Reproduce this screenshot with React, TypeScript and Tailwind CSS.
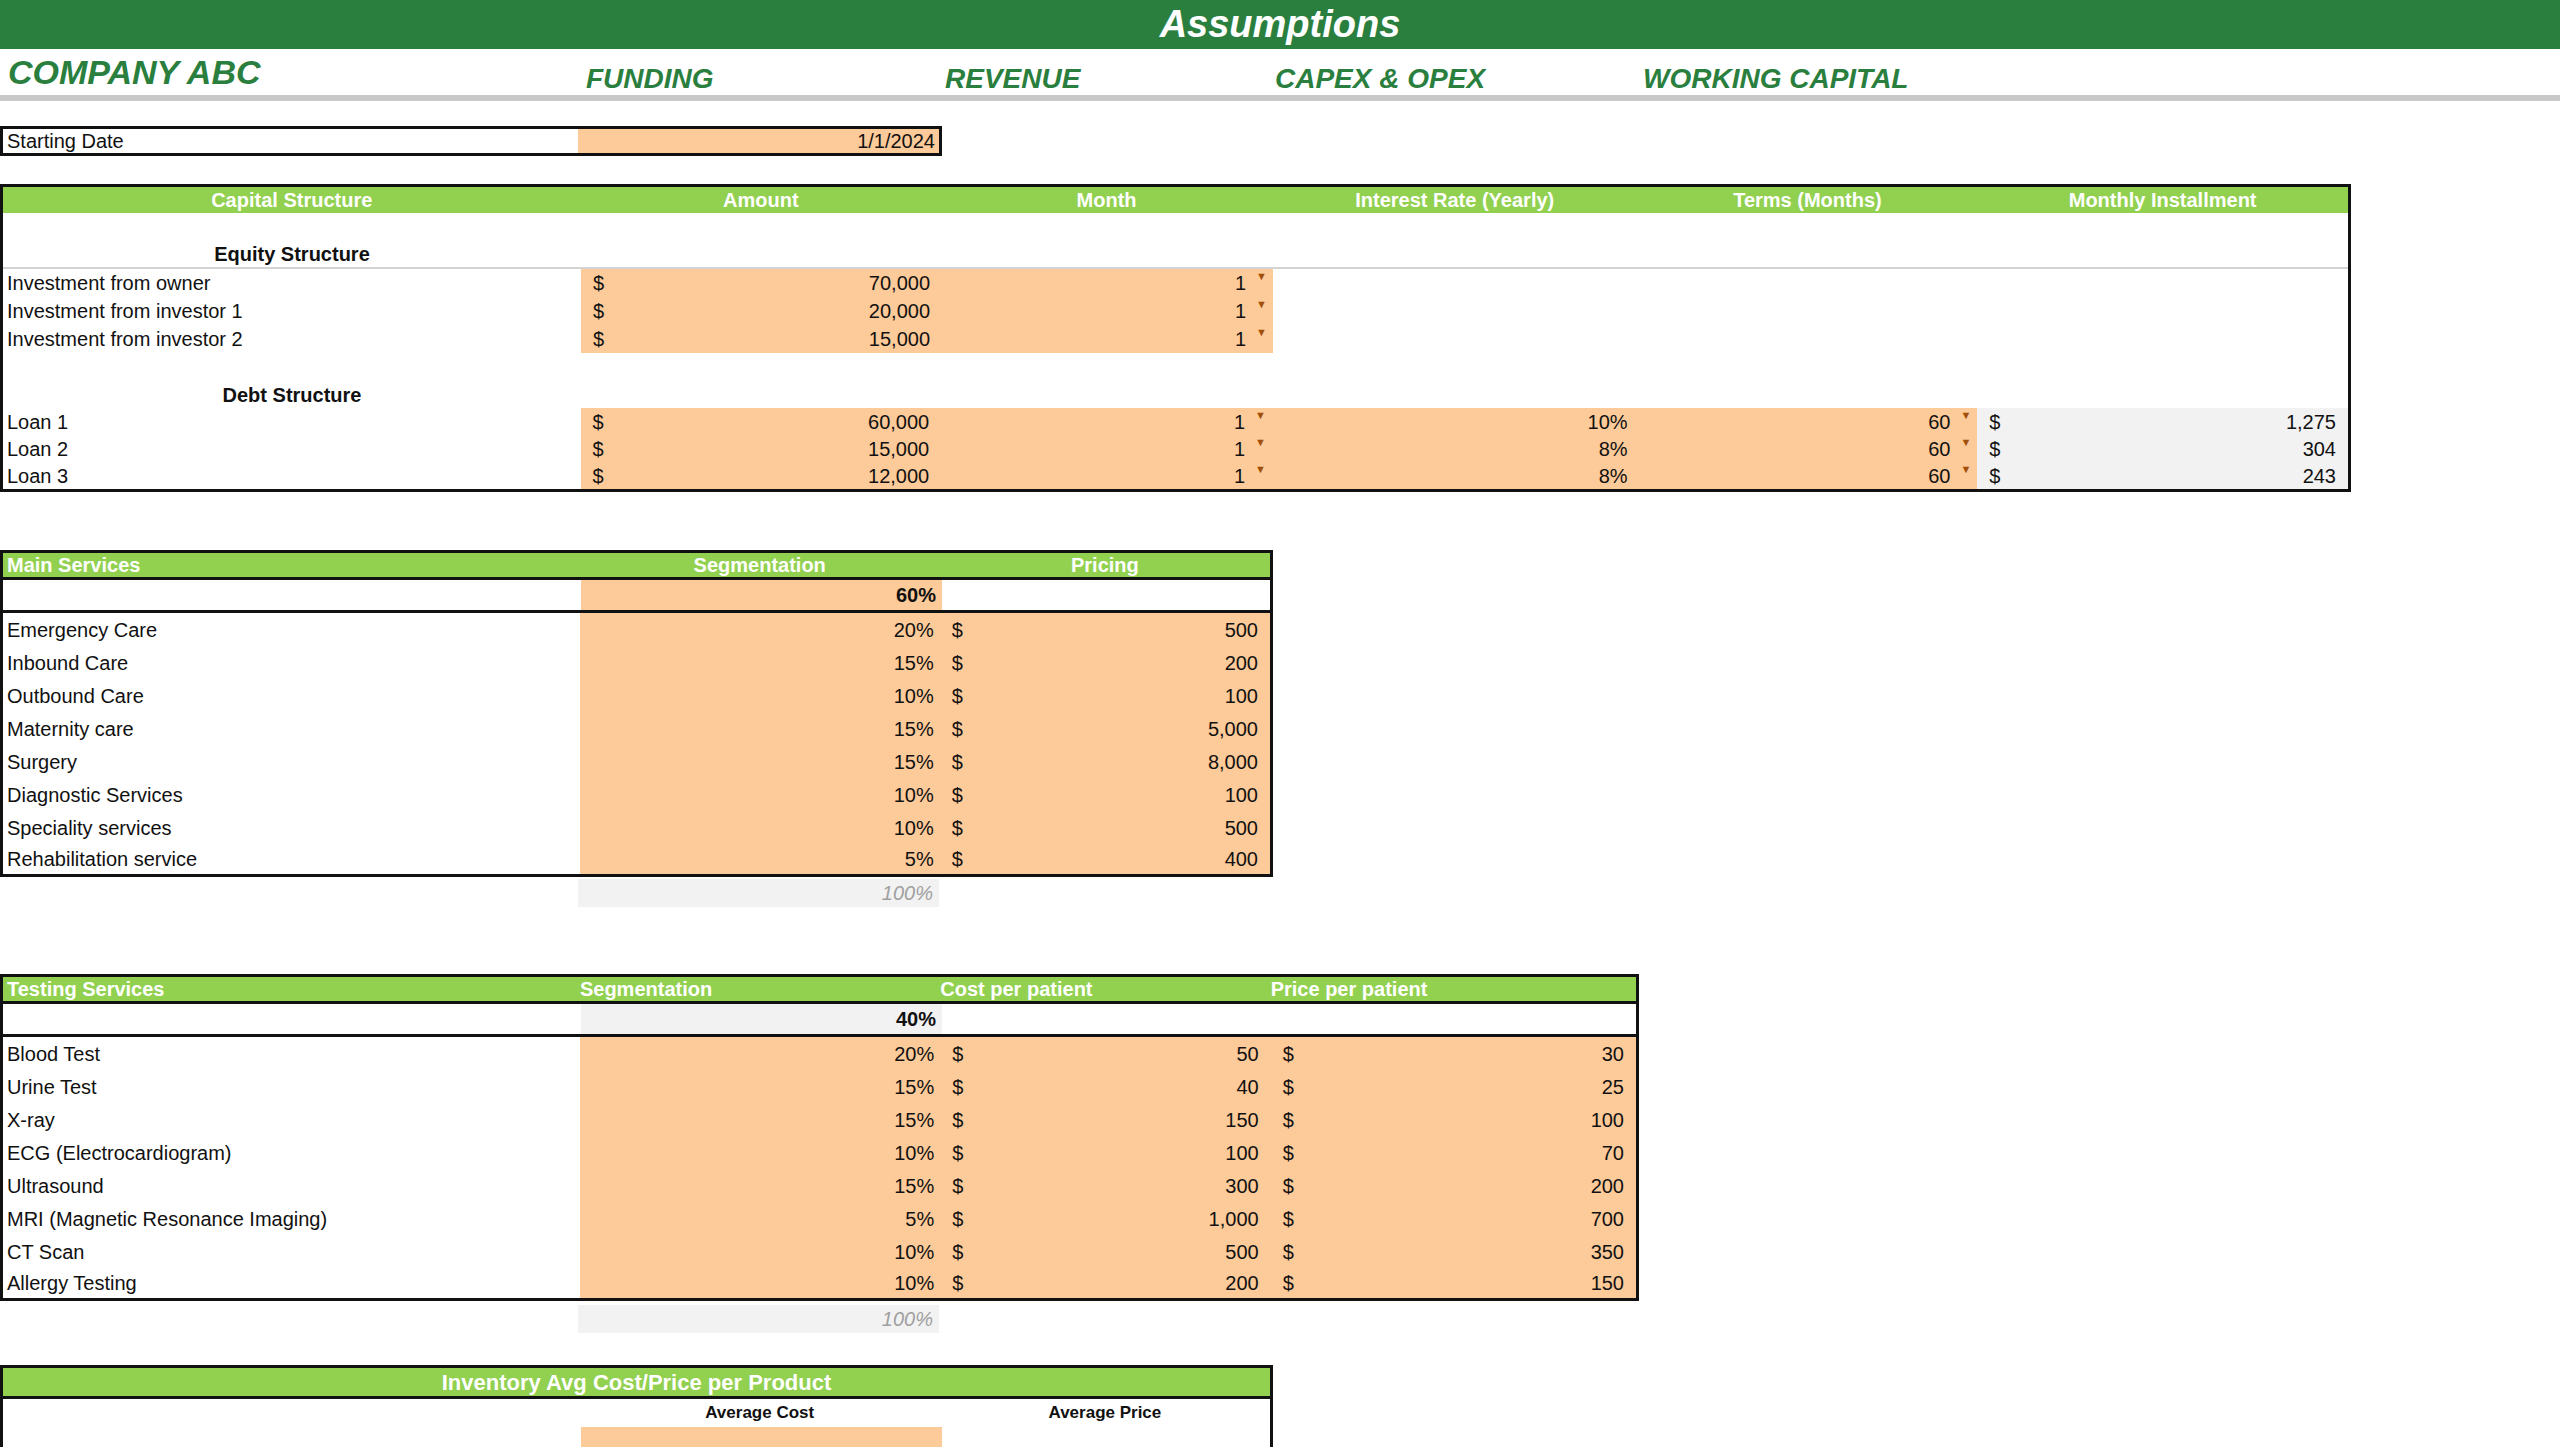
const font = { fontFamily: '"Liberation Sans", Arial, sans-serif' }

const W = ['w-[578px]', 'w-[361px]', 'w-[331px]', 'w-[366px]', 'w-[340px]', 'w-[371px]']

function Drop() {
  return <span className="ml-[10px] mr-[6px] self-start mt-[2px] text-[11px] leading-none text-[#a0500a]">▼</span>
}

function Money({ v, bg = 'bg-[#fdca99]', w }: { v: string; bg?: string; w: string }) {
  return (
    <div className={`${w} ${bg} flex justify-between items-center px-[12px] h-full`}>
      <span>$</span>
      <span>{v}</span>
    </div>
  )
}

function Blank({ w, bg = '' }: { w: string; bg?: string }) {
  return <div className={`${w} ${bg} h-full`} />
}

function Pct({ v, w, bg = 'bg-[#fdca99]', cls = '' }: { v: string; w: string; bg?: string; cls?: string }) {
  return <div className={`${w} ${bg} h-full flex items-center justify-end pr-[6px] ${cls}`}>{v}</div>
}

function MonthCell({ w }: { w: string }) {
  return (
    <div className={`${w} bg-[#fdca99] h-full flex items-center justify-end`}>
      <span>1</span>
      <Drop />
    </div>
  )
}

const equity = [
  ['Investment from owner', '70,000'],
  ['Investment from investor 1', '20,000'],
  ['Investment from investor 2', '15,000'],
]
const loans = [
  ['Loan 1', '60,000', '10%', '1,275'],
  ['Loan 2', '15,000', '8%', '304'],
  ['Loan 3', '12,000', '8%', '243'],
]
const mainServices = [
  ['Emergency Care', '20%', '500'],
  ['Inbound Care', '15%', '200'],
  ['Outbound Care', '10%', '100'],
  ['Maternity care', '15%', '5,000'],
  ['Surgery', '15%', '8,000'],
  ['Diagnostic Services', '10%', '100'],
  ['Speciality services', '10%', '500'],
  ['Rehabilitation service', '5%', '400'],
]
const testing = [
  ['Blood Test', '20%', '50', '30'],
  ['Urine Test', '15%', '40', '25'],
  ['X-ray', '15%', '150', '100'],
  ['ECG (Electrocardiogram)', '10%', '100', '70'],
  ['Ultrasound', '15%', '300', '200'],
  ['MRI (Magnetic Resonance Imaging)', '5%', '1,000', '700'],
  ['CT Scan', '10%', '500', '350'],
  ['Allergy Testing', '10%', '200', '150'],
]

export default function App() {
  return (
    <div className="w-[2560px] h-[1456px] overflow-hidden bg-white text-[20px] text-[#111]" style={font}>
      <div className="h-[49px] bg-[#2a7f3f] flex items-center justify-center">
        <span className="text-white font-bold italic text-[38px]">Assumptions</span>
      </div>
      <div className="h-[46px] flex items-end pb-[2px] text-[#2a7f3f] font-bold italic">
        <div className="w-[586px] pl-[8px] text-[34px] leading-none pb-[4px]">COMPANY ABC</div>
        <div className="w-[359px] text-[28px] leading-none">FUNDING</div>
        <div className="w-[330px] text-[28px] leading-none">REVENUE</div>
        <div className="w-[368px] text-[28px] leading-none">CAPEX &amp; OPEX</div>
        <div className="text-[28px] leading-none">WORKING CAPITAL</div>
      </div>
      <div className="h-[6px] bg-[#c8c8c8]" />

      {/* starting date */}
      <div className="mt-[25px] flex">
        <div className="flex h-[30px] border-[3px] border-[#111]">
          <div className="w-[575px] flex items-center pl-[4px]">Starting Date</div>
          <div className="w-[361px] bg-[#fdca99] flex items-center justify-end pr-[4px]">1/1/2024</div>
        </div>
      </div>

      {/* capital structure */}
      <div className="mt-[28px] w-[2351px] border-[3px] border-[#111]">
        <div className="flex h-[26px] bg-[#92d050] text-white font-bold items-center text-center">
          <div className={W[0]}>Capital Structure</div>
          <div className={W[1]}>Amount</div>
          <div className={W[2]}>Month</div>
          <div className={W[3]}>Interest Rate (Yearly)</div>
          <div className={W[4]}>Terms (Months)</div>
          <div className={W[5]}>Monthly Installment</div>
        </div>
        <div className="h-[28px]" />
        <div className="h-[28px] flex items-center border-b-2 border-[#d4d4d4] font-bold">
          <div className={`${W[0]} text-center`}>Equity Structure</div>
        </div>
        {equity.map(([l, v]) => (
          <div key={l} className="flex h-[28px] items-center">
            <div className={`${W[0]} pl-[4px]`}>{l}</div>
            <Money v={v} w={W[1]} />
            <MonthCell w={W[2]} />
          </div>
        ))}
        <div className="h-[28px]" />
        <div className="h-[27px] flex items-center font-bold">
          <div className={`${W[0]} text-center`}>Debt Structure</div>
        </div>
        {loans.map(([l, v, r, m]) => (
          <div key={l} className="flex h-[27px] items-center">
            <div className={`${W[0]} pl-[4px]`}>{l}</div>
            <Money v={v} w={W[1]} />
            <MonthCell w={W[2]} />
            <Pct v={r} w={W[3]} cls="pr-[10px]" />
            <div className={`${W[4]} bg-[#fdca99] h-full flex items-center justify-end`}>
              <span>60</span>
              <Drop />
            </div>
            <Money v={m} w={W[5]} bg="bg-[#f2f2f2]" />
          </div>
        ))}
      </div>

      {/* main services */}
      <div className="mt-[58px] w-[1273px] border-[3px] border-[#111]">
        <div className="flex h-[27px] bg-[#92d050] text-white font-bold items-center border-b-[3px] border-[#111]">
          <div className={`${W[0]} pl-[4px]`}>Main Services</div>
          <div className={`${W[1]} text-center`}>Segmentation</div>
          <div className={`${W[2]} text-center`}>Pricing</div>
        </div>
        <div className="flex h-[33px] items-center border-b-[3px] border-[#111] font-bold">
          <Blank w={W[0]} />
          <Pct v="60%" w={W[1]} />
        </div>
        {mainServices.map(([l, p, v], i) => (
          <div key={l} className={`flex items-center ${i === 7 ? 'h-[30px]' : 'h-[33px]'}`}>
            <div className={`${W[0]} pl-[4px]`}>{l}</div>
            <Pct v={p} w={W[1]} />
            <Money v={v} w={W[2]} />
          </div>
        ))}
      </div>
      <div className="flex h-[28px] mt-[2px]">
        <Blank w={W[0]} />
        <Pct v="100%" w={W[1]} bg="bg-[#f2f2f2]" cls="italic text-[#a0a0a0]" />
      </div>

      {/* testing services */}
      <div className="mt-[67px] w-[1639px] border-[3px] border-[#111]">
        <div className="flex h-[27px] bg-[#92d050] text-white font-bold items-center border-b-[3px] border-[#111]">
          <div className={`${W[0]} pl-[4px]`}>Testing Services</div>
          <div className={W[1]}>Segmentation</div>
          <div className={W[2]}>Cost per patient</div>
          <div className={W[3]}>Price per patient</div>
        </div>
        <div className="flex h-[33px] items-center border-b-[3px] border-[#111] font-bold">
          <Blank w={W[0]} />
          <Pct v="40%" w={W[1]} bg="bg-[#f2f2f2]" />
        </div>
        {testing.map(([l, p, c, pr], i) => (
          <div key={l} className={`flex items-center ${i === 7 ? 'h-[30px]' : 'h-[33px]'}`}>
            <div className={`${W[0]} pl-[4px]`}>{l}</div>
            <Pct v={p} w={W[1]} />
            <Money v={c} w={W[2]} />
            <Money v={pr} w={W[3]} />
          </div>
        ))}
      </div>
      <div className="flex h-[28px] mt-[4px]">
        <Blank w={W[0]} />
        <Pct v="100%" w={W[1]} bg="bg-[#f2f2f2]" cls="italic text-[#a0a0a0]" />
      </div>

      {/* inventory */}
      <div className="mt-[32px] w-[1273px] border-x-[3px] border-[#111]">
        <div className="h-[34px] bg-[#92d050] border-[3px] -mx-[3px] border-[#111] flex items-center justify-center text-white font-bold text-[22px]">
          Inventory Avg Cost/Price per Product
        </div>
        <div className="flex h-[28px] items-center font-bold text-[17px]">
          <Blank w={W[0]} />
          <div className={`${W[1]} text-center`}>Average Cost</div>
          <div className={`${W[2]} text-center`}>Average Price</div>
        </div>
        <div className="flex h-[20px]">
          <Blank w={W[0]} />
          <Blank w={W[1]} bg="bg-[#fdca99]" />
        </div>
      </div>
    </div>
  )
}
